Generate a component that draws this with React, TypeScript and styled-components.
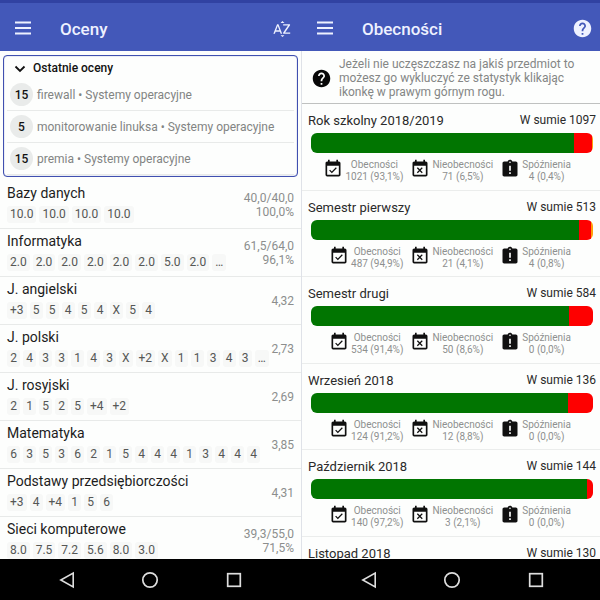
import React from "react";
import styled, { createGlobalStyle } from "styled-components";
import {
  MdAssignmentLate,
  MdEventAvailable,
  MdEventBusy,
  MdHelp,
  MdSortByAlpha,
} from "react-icons/md";

const GlobalStyle = createGlobalStyle`
  * { box-sizing: border-box; }
  body {
    margin: 0;
    background: #fdfefd;
    font-family: Roboto, "Liberation Sans", sans-serif;
    color: #222;
  }
  button { font: inherit; }
  h1, h2, h3, p, ul { margin: 0; padding: 0; font-weight: 400; }
  ul { list-style: none; }
`;

const Screens = styled.div`
  display: grid;
  grid-template-columns: 301fr 299fr;
  height: 100vh;
`;

const AppBar = styled.header`
  flex: none;
  display: flex;
  align-items: center;
  height: 51px;
  padding: 3px 9px 0 12px;
  border-top: 3px solid #3142a2;
  background: #4358b9;
  color: #eef1ff;
`;

const Content = styled.main`
  flex: 1;
  min-height: 0;
  overflow: hidden;
`;

const NavBar = styled.nav`
  flex: none;
  display: grid;
  grid-template-columns: repeat(3, 1fr);
  height: 41px;
  padding: 0 25px;
  background: #000;
  color: #dedede;
`;

const Phone = styled.section`
  display: flex;
  flex-direction: column;
  min-width: 0;
  min-height: 0;
  overflow: hidden;

  & + & ${AppBar} {
    padding: 3px 7px 0 13px;
  }
  & + & ${Content} {
    border-left: 1px solid #dfe2e8;
  }
  & + & ${NavBar} {
    padding: 0 22px 0 26px;
  }
`;

const IconButton = styled.button`
  display: flex;
  align-items: center;
  justify-content: center;
  padding: 0;
  border: 0;
  background: none;
  color: inherit;
`;

const Title = styled.h1`
  flex: 1;
  margin-left: 26px;
  font-size: 17px;
  line-height: 20px;
  font-weight: 500;
`;

const RecentCard = styled.section`
  margin: 4px 3px;
  padding: 0 3px 1px;
  border: 1px solid #4050b0;
  border-radius: 4px;
  box-shadow: inset 0 0 1px #4050b0;
`;

const RecentToggle = styled.button`
  display: flex;
  align-items: center;
  gap: 7px;
  width: 100%;
  height: 23px;
  padding: 0 7px;
  border: 0;
  background: none;
  color: #111;
  font-size: 12px;
  font-weight: 500;
`;

const RecentItem = styled.li`
  display: flex;
  align-items: center;
  gap: 4px;
  height: 32px;
  padding-left: 3px;
  border-bottom: 1px solid #e8eae9;
  color: #828483;
  font-size: 12px;
`;

const Grade = styled.span`
  display: flex;
  align-items: center;
  justify-content: center;
  width: 23px;
  height: 23px;
  border-radius: 50%;
  background: #e9ebea;
  color: #111;
  font-size: 12px;
  font-weight: 500;
`;

const Subject = styled.li`
  display: flex;
  align-items: flex-start;
  justify-content: space-between;
  height: 48px;
  padding: 3px 7px;
  border-bottom: 1px solid #e8eae9;
`;

const SubjectName = styled.h2`
  font-size: 14px;
  line-height: 18px;
  color: #1c1c1c;
`;

const Chips = styled.div`
  display: flex;
  gap: 3px;
  margin-top: 4px;
`;

const Chip = styled.span`
  min-width: 13px;
  padding: 0 3px;
  border-radius: 3px;
  background: #f7f8f7;
  color: #555755;
  font-size: 12px;
  line-height: 17px;
  text-align: center;
`;

const Score = styled.div`
  align-self: center;
  color: #8c8e8d;
  font-size: 12px;
  line-height: 14px;
  text-align: right;
  white-space: pre-line;
`;

const Notice = styled.aside`
  display: flex;
  align-items: center;
  gap: 7px;
  padding: 6px 9px 4px;
  border-bottom: 1px solid #bfc1c0;
  color: #848685;
  font-size: 12px;
  line-height: 14px;

  svg {
    flex: none;
    color: #080808;
  }
`;

const Period = styled.article`
  height: 86px;
  padding: 8px 4px 0 6px;
  border-bottom: 1px solid #ebedec;

  &:nth-of-type(odd) {
    height: 87px;
  }
`;

const PeriodHead = styled.div`
  display: flex;
  align-items: flex-start;
  justify-content: space-between;
`;

const PeriodName = styled.h2`
  font-size: 13px;
  line-height: 18px;
  color: #2a2a2a;
`;

const Total = styled.p`
  font-size: 12px;
  line-height: 16px;
  color: #2a2a2a;
`;

const Bar = styled.div`
  display: flex;
  height: 20px;
  margin: 3px 3px 6px;
  border-radius: 6px;
  overflow: hidden;
`;

const Segment = styled.span<{ $color: string; $share: number }>`
  flex: ${(p) => p.$share} 0 0;
  background: ${(p) => p.$color};
`;

const Stats = styled.div`
  display: grid;
  grid-template-columns: 1fr auto auto;
  justify-items: end;
  gap: 7px;
  padding-right: 25px;
`;

const Stat = styled.div`
  display: flex;
  align-items: flex-start;
  gap: 2px;
  color: #8e908f;
  font-size: 10px;
  line-height: 12px;
  text-align: center;
  white-space: nowrap;

  svg {
    flex: none;
    color: #101010;
  }
`;

const MenuIcon = () => (
  <svg width="22" height="20" viewBox="0 0 22 20" stroke="currentColor" strokeWidth="2">
    <path d="M3 3.600h16M3 9h16M3 14.400h16" />
  </svg>
);

const Chevron = () => (
  <svg width="12" height="12" viewBox="0 0 12 12" fill="none" stroke="#111" strokeWidth="1.8">
    <path d="M1.500 4.500 6 9l4.500-4.500" />
  </svg>
);

const Nav = () => (
  <NavBar aria-label="System">
    <IconButton aria-label="Wstecz">
      <svg width="18" height="18" viewBox="0 0 18 18" fill="none" stroke="currentColor" strokeWidth="1.6">
        <path d="M15.200 2v14L2.800 9z" />
      </svg>
    </IconButton>
    <IconButton aria-label="Ekran główny">
      <svg width="18" height="18" viewBox="0 0 18 18" fill="none" stroke="currentColor" strokeWidth="1.7">
        <circle cx="9" cy="9" r="7.200" />
      </svg>
    </IconButton>
    <IconButton aria-label="Ostatnie">
      <svg width="18" height="18" viewBox="0 0 18 18" fill="none" stroke="currentColor" strokeWidth="1.7">
        <rect x="2.700" y="2.700" width="12.600" height="12.600" />
      </svg>
    </IconButton>
  </NavBar>
);

const recent = [
  { grade: "15", text: "firewall • Systemy operacyjne" },
  { grade: "5", text: "monitorowanie linuksa • Systemy operacyjne" },
  { grade: "15", text: "premia • Systemy operacyjne" },
];

const subjects = [
  { name: "Bazy danych", grades: "10.0 10.0 10.0 10.0", score: "40,0/40,0\n100,0%" },
  { name: "Informatyka", grades: "2.0 2.0 2.0 2.0 2.0 2.0 5.0 2.0 …", score: "61,5/64,0\n96,1%" },
  { name: "J. angielski", grades: "+3 5 5 4 5 4 X 5 4", score: "4,32" },
  { name: "J. polski", grades: "2 4 3 3 1 4 3 X +2 X 1 1 3 4 3 …", score: "2,73" },
  { name: "J. rosyjski", grades: "2 1 5 2 5 +4 +2", score: "2,69" },
  { name: "Matematyka", grades: "6 3 5 3 6 2 1 5 4 4 4 1 3 4 4 4", score: "3,85" },
  { name: "Podstawy przedsiębiorczości", grades: "+3 4 +4 1 5 6", score: "4,31" },
  { name: "Sieci komputerowe", grades: "8.0 7.5 7.2 5.6 8.0 3.0", score: "39,3/55,0\n71,5%" },
];

type Details = {
  present: string;
  absent: [number, string];
  late: [number, string];
};

type PeriodData = { name: string; total: number; details?: Details };

const periods: PeriodData[] = [
  {
    name: "Rok szkolny 2018/2019",
    total: 1097,
    details: { present: "1021 (93,1%)", absent: [71, "6,5%"], late: [4, "0,4%"] },
  },
  {
    name: "Semestr pierwszy",
    total: 513,
    details: { present: "487 (94,9%)", absent: [21, "4,1%"], late: [4, "0,8%"] },
  },
  {
    name: "Semestr drugi",
    total: 584,
    details: { present: "534 (91,4%)", absent: [50, "8,6%"], late: [0, "0,0%"] },
  },
  {
    name: "Wrzesień 2018",
    total: 136,
    details: { present: "124 (91,2%)", absent: [12, "8,8%"], late: [0, "0,0%"] },
  },
  {
    name: "Październik 2018",
    total: 144,
    details: { present: "140 (97,2%)", absent: [3, "2,1%"], late: [0, "0,0%"] },
  },
  { name: "Listopad 2018", total: 130 },
];

const PeriodDetails = ({ total, details }: { total: number; details: Details }) => {
  const { present, absent, late } = details;
  return (
    <>
      <Bar>
        <Segment $color="#017501" $share={total - absent[0] - late[0]} />
        <Segment $color="#fe0000" $share={absent[0]} />
        <Segment $color="#ff9d0a" $share={late[0]} />
      </Bar>
      <Stats>
        <Stat>
          <MdEventAvailable size={20} />
          <p>Obecności<br />{present}</p>
        </Stat>
        <Stat>
          <MdEventBusy size={20} />
          <p>Nieobecności<br />{absent[0]} ({absent[1]})</p>
        </Stat>
        <Stat>
          <MdAssignmentLate size={20} />
          <p>Spóźnienia<br />{late[0]} ({late[1]})</p>
        </Stat>
      </Stats>
    </>
  );
};

export default function App() {
  return (
    <>
      <GlobalStyle />
      <Screens>
        <Phone>
          <AppBar>
            <IconButton aria-label="Menu"><MenuIcon /></IconButton>
            <Title>Oceny</Title>
            <IconButton aria-label="Sortuj alfabetycznie"><MdSortByAlpha size={20} /></IconButton>
          </AppBar>
          <Content>
            <RecentCard>
              <RecentToggle aria-expanded="true"><Chevron />Ostatnie oceny</RecentToggle>
              <ul>
                {recent.map((r) => (
                  <RecentItem key={r.text}><Grade>{r.grade}</Grade>{r.text}</RecentItem>
                ))}
              </ul>
            </RecentCard>
            <ul>
              {subjects.map((s) => (
                <Subject key={s.name}>
                  <div>
                    <SubjectName>{s.name}</SubjectName>
                    <Chips>
                      {s.grades.split(" ").map((g, i) => <Chip key={i}>{g}</Chip>)}
                    </Chips>
                  </div>
                  <Score>{s.score}</Score>
                </Subject>
              ))}
            </ul>
          </Content>
          <Nav />
        </Phone>
        <Phone>
          <AppBar>
            <IconButton aria-label="Menu"><MenuIcon /></IconButton>
            <Title>Obecności</Title>
            <IconButton aria-label="Pomoc"><MdHelp size={21} /></IconButton>
          </AppBar>
          <Content>
            <Notice>
              <MdHelp size={21} />
              <p>
                Jeżeli nie uczęszczasz na jakiś przedmiot to możesz go wykluczyć ze
                statystyk klikając ikonkę w prawym górnym rogu.
              </p>
            </Notice>
            {periods.map(({ name, total, details }) => (
              <Period key={name}>
                <PeriodHead>
                  <PeriodName>{name}</PeriodName>
                  <Total>W sumie {total}</Total>
                </PeriodHead>
                {details && <PeriodDetails total={total} details={details} />}
              </Period>
            ))}
          </Content>
          <Nav />
        </Phone>
      </Screens>
    </>
  );
}
